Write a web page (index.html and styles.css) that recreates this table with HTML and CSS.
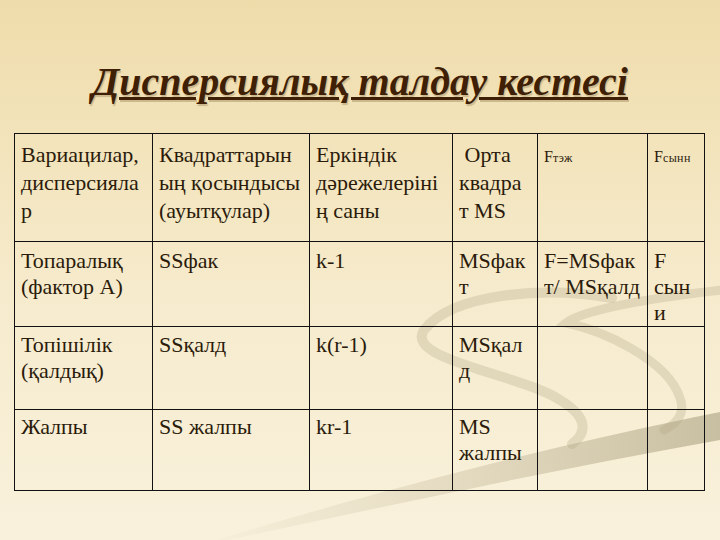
FILE: index.html
```html
<!DOCTYPE html>
<html>
<head>
<meta charset="utf-8">
<title>Дисперсиялық талдау кестесі</title>
<link rel="stylesheet" href="styles.css">
</head>
<body>
<div class="slide">
  <svg class="swoosh" width="720" height="540" viewBox="0 0 720 540" aria-hidden="true">
    <defs>
      <linearGradient id="g1" x1="190" y1="0" x2="720" y2="0" gradientUnits="userSpaceOnUse">
        <stop offset="0" stop-color="#b4aa8a" stop-opacity="0"/>
        <stop offset="0.5" stop-color="#b4aa8a" stop-opacity="0.3"/>
        <stop offset="1" stop-color="#a89e7e" stop-opacity="0.6"/>
      </linearGradient>
    </defs>
    <path d="M 190 548 C 330 505, 520 452, 720 412 L 720 440 C 540 472, 360 512, 190 548 Z" fill="url(#g1)"/>
    <path d="M 612 298 C 540 286, 452 294, 424 330 C 404 360, 520 374, 560 400 C 590 418, 586 434, 572 444" fill="none" stroke="#b0a684" stroke-opacity="0.3" stroke-width="10" stroke-linecap="round"/>
    <path d="M 722 290 C 650 298, 582 310, 566 323 C 602 330, 668 360, 680 398 C 686 414, 676 424, 664 430" fill="none" stroke="#b0a684" stroke-opacity="0.3" stroke-width="9" stroke-linecap="round"/>
  </svg>

  <h1 class="title">Дисперсиялық талдау кестесі</h1>

  <table class="grid">
    <colgroup>
      <col class="c1"><col class="c2"><col class="c3"><col class="c4"><col class="c5"><col class="c6">
    </colgroup>
    <tr class="r1">
      <td>Вариацилар,<br>дисперсияла<br>р</td>
      <td>Квадраттарын<br>ың қосындысы<br>(ауытқулар)</td>
      <td>Еркіндік<br>дәрежелеріні<br>ң саны</td>
      <td>&nbsp;Орта<br>квадра<br>т MS</td>
      <td><span class="f">F</span><span class="sub">тэж</span></td>
      <td><span class="f">F</span><span class="sub">сынн</span></td>
    </tr>
    <tr class="r2">
      <td>Топаралық<br>(фактор А)</td>
      <td>SSфак</td>
      <td>k-1</td>
      <td>MSфак<br>т</td>
      <td>F=MSфак<br>т/ MSқалд</td>
      <td>F<br>сын<br>и</td>
    </tr>
    <tr class="r3">
      <td>Топішілік<br>(қалдық)</td>
      <td>SSқалд</td>
      <td>k(r-1)</td>
      <td>MSқал<br>д</td>
      <td></td>
      <td></td>
    </tr>
    <tr class="r4">
      <td>Жалпы</td>
      <td>SS жалпы</td>
      <td>kr-1</td>
      <td>MS<br>жалпы</td>
      <td></td>
      <td></td>
    </tr>
  </table>
</div>
</body>
</html>
```

FILE: styles.css
```css
html, body {
  margin: 0;
  padding: 0;
}

body {
  width: 720px;
  height: 540px;
  overflow: hidden;
  background: linear-gradient(to bottom, #efdcab 0%, #f2e3ba 25%, #f6ebcd 55%, #f9f1dc 100%);
  font-family: "Liberation Serif", "DejaVu Serif", serif;
}

.slide {
  position: relative;
  width: 720px;
  height: 540px;
  display: flex;
  flex-direction: column;
  align-items: flex-start;
}

.swoosh {
  position: absolute;
  left: 0;
  top: 0;
  z-index: 0;
}

.title {
  position: relative;
  z-index: 1;
  align-self: center;
  margin: 60px 0 0 0;
  font-family: "Liberation Serif", "DejaVu Serif", serif;
  font-size: 40px;
  line-height: 44px;
  font-weight: bold;
  font-style: italic;
  color: #3f1f05;
  text-decoration: underline;
  text-decoration-thickness: 3px;
  text-underline-offset: 2px;
  text-shadow: 1px 2px 1px rgba(90, 60, 20, 0.25);
}

.grid {
  position: relative;
  z-index: 1;
  margin: 29px 0 0 14px;
  border-collapse: collapse;
  table-layout: fixed;
  width: 691px;
  color: #2b1b0b;
  font-family: "Liberation Serif", "DejaVu Serif", serif;
  font-size: 22px;
  line-height: 26px;
}

.c1 { width: 138px; }
.c2 { width: 157px; }
.c3 { width: 143px; }
.c4 { width: 85px; }
.c5 { width: 110px; }
.c6 { width: 57px; }

.grid td {
  border: 1px solid #111;
  vertical-align: top;
  padding: 6px 2px 0 6px;
  white-space: nowrap;
  overflow: hidden;
}

.r1 td { height: 100px; padding-top: 7px; line-height: 28px; }
.r2 td { height: 78px; padding-top: 6px; }
.r3 td { height: 77px; padding-top: 5px; }
.r4 td { height: 76px; padding-top: 4px; }

.f {
  font-size: 16px;
}

.sub {
  font-size: 12px;
  letter-spacing: 0.4px;
}
```
